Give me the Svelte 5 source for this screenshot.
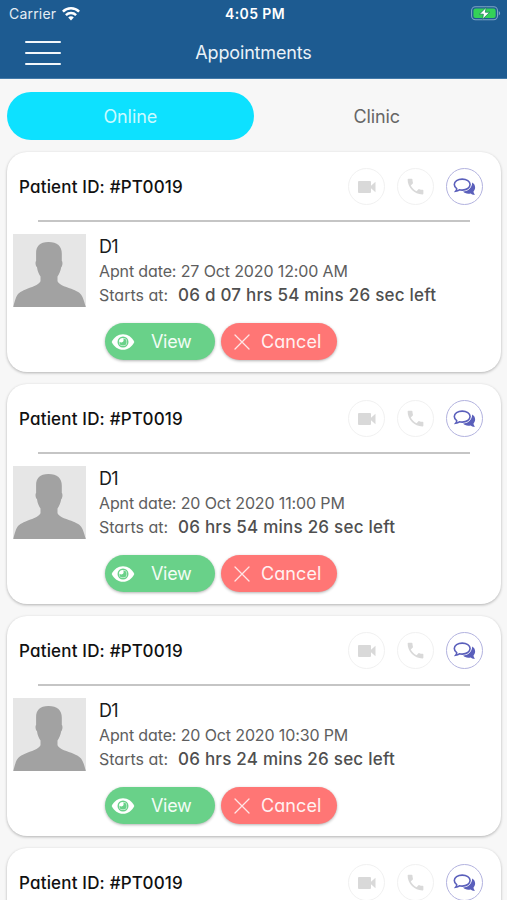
<script>
  const appointments = [
    { date: '27 Oct 2020 12:00 AM', left: '06 d 07 hrs 54 mins 26 sec left' },
    { date: '20 Oct 2020 11:00 PM', left: '06 hrs 54 mins 26 sec left' },
    { date: '20 Oct 2020 10:30 PM', left: '06 hrs 24 mins 26 sec left' },
    null
  ];
</script>

<div class="screen">
  <header>
    <div class="status">
      <div class="carrier">
        <span class="carrier-name">Carrier</span>
        <svg width="18" height="14" viewBox="0 0 18 14" fill="none" stroke="#fff" stroke-width="2.5">
          <path d="M.9 4.600C5.400.2 12.600.2 17.100 4.600" />
          <path d="M3.900 8.200c2.900-2.800 7.300-2.800 10.200 0" />
          <path d="M6.200 10.500c1.600-1.600 4-1.600 5.600 0L9 13.500z" fill="#fff" stroke="none" />
        </svg>
      </div>
      <span class="time">4:05 PM</span>
      <svg class="battery" width="30" height="15" viewBox="0 0 31 15">
        <rect x=".6" y=".6" width="26.8" height="13.3" rx="4" fill="none" stroke="#7fa5c5" stroke-width="1.1" />
        <rect x="2.5" y="2.4" width="23" height="9.8" rx="2.2" fill="#34d158" />
        <path d="M28.7 5v4.6c1.9-.7 1.9-3.9 0-4.6z" fill="#7fa5c5" />
        <path d="M15.7 1.2 8.6 8.2h4.2l-.8 5.2 7.3-7.2h-4.5z" fill="#fff" stroke="#1d7a5c" stroke-width=".8" />
      </svg>
    </div>
    <div class="nav">
      <button class="menu" aria-label="Menu"><i></i><i></i><i></i></button>
      <h1>Appointments</h1>
      <span></span>
    </div>
  </header>

  <div class="tabs">
    <button class="tab active">Online</button>
    <button class="tab">Clinic</button>
  </div>

  <main>
    {#each appointments as item}
      <article class="card">
        <div class="top">
          <span class="pid">Patient ID: #PT0019</span>
          <div class="actions">
            <span class="round">
              <svg width="20" height="14" viewBox="0 0 20 14" fill="#d9d9d9">
                <path d="M2 1h11q1 0 1 1v3.8L18.5 1.8v10.4L14 8.2V12q0 1-1 1H2q-1 0-1-1V2q0-1 1-1z" />
              </svg>
            </span>
            <span class="round">
              <svg width="21" height="21" viewBox="0 0 24 24" fill="#d9d9d9">
                <path d="M6.6 10.8c1.4 2.8 3.8 5.1 6.6 6.6l2.2-2.2c.3-.3.7-.4 1-.2 1.1.4 2.3.6 3.6.6.6 0 1 .4 1 1V20c0 .6-.4 1-1 1C10.6 21 3 13.4 3 4c0-.6.4-1 1-1h3.5c.6 0 1 .4 1 1 0 1.2.2 2.4.6 3.6.1.3 0 .7-.2 1z" />
              </svg>
            </span>
            <span class="round chat">
              <svg width="23" height="18" viewBox="0 0 23 18">
                <path d="M19.2 4.600c3.300 1.900 3.900 6 1.300 8.800.1 1.300.7 2.300 1.500 3.400-1.800.2-3.200-.3-4.300-1.300-3.200.7-6.200 0-7.600-1.900 5.400-.1 9-4 9.100-9z" fill="#5a5fbb" />
                <path d="M9.200 1.100c4.400 0 7.900 2.400 7.900 5.500s-3.500 5.500-7.900 5.500c-1 0-1.900-.1-2.800-.3-1 .8-2.300 1.300-3.700 1.400.8-.9 1.100-1.600 1-2.600-1.500-1-2.400-2.400-2.400-4 0-3.100 3.500-5.500 7.900-5.500z" fill="#fff" stroke="#5a5fbb" stroke-width="1.600" />
              </svg>
            </span>
          </div>
        </div>
        {#if item}
          <hr />
          <div class="info">
            <svg class="avatar" width="73" height="73" viewBox="0 0 73 73">
              <rect width="73" height="73" fill="#e6e6e6" />
              <path d="M35.5 8c9 0 13.500 4.500 13.300 12v7c1.100.5.8 5-.6 6.300-.6 4-2.200 7-3.700 9.200v4.800c2 4.500 10 6 16 8.400 7.500 3.200 9 4.500 12.300 17.300H.3C3.500 60.200 4.500 59 12 55.700c6-2.600 14-4.500 15.500-8.400v-4.800c-1.800-2.500-3-5.500-3.500-9.200-1.500-1.300-2-5.500-.9-6.300v-7C22.900 12.500 26.500 8 35.500 8z" fill="#a2a2a2" />
            </svg>
            <div class="text">
              <div class="name">D1</div>
              <div class="line date">Apnt date: {item.date}</div>
              <div class="line"><span class="starts">Starts at:</span><b>{item.left}</b></div>
            </div>
          </div>
          <div class="buttons">
            <button class="btn view">
              <svg width="24" height="18" viewBox="0 0 24 18">
                <path d="M.7 9C3 4.200 7.100 1.200 12 1.200S21 4.200 23.300 9C21 13.800 16.900 16.800 12 16.800S3 13.800.7 9z" fill="#fff" />
                <circle cx="12" cy="9" r="5.500" fill="#69d189" />
                <circle cx="12" cy="9" r="4.100" fill="#fff" />
                <path d="M12.200 5.400A3.600 3.600 0 1 1 8.500 8.400c1 1.500 3.400 1.300 4-.3.300-1 .1-1.900-.3-2.700z" fill="#69d189" />
              </svg>
              <span>View</span>
            </button>
            <button class="btn cancel">
              <svg width="16" height="16" viewBox="0 0 16 16" stroke="#ffe6e6" stroke-width="1.300" stroke-linecap="round">
                <path d="M1 1l14 14M15 1L1 15" />
              </svg>
              <span>Cancel</span>
            </button>
          </div>
        {/if}
      </article>
    {/each}
  </main>
</div>

<style>
  .screen {
    width: 507px;
    height: 900px;
    overflow: hidden;
    background: #f7f7f7;
    font-family: Inter, 'Open Sans', sans-serif;
  }
  svg { display: block; flex: none; }
  button { border: 0; padding: 0; font: inherit; background: none; }
  header {
    height: 79px;
    box-sizing: border-box;
    background: #1d5b91;
    color: #fff;
    border-bottom: 1px solid #437aa9;
  }
  .status, .nav {
    display: grid;
    grid-template-columns: 1fr auto 1fr;
    align-items: center;
  }
  .status { height: 27px; padding: 0 6px 0 9px; font-size: 14px; }
  .carrier { display: flex; align-items: center; gap: 6px; color: #e5edf4; }
  .carrier-name { width: 47px; letter-spacing: 0.2px; white-space: nowrap; }
  .time { font-size: 14px; font-weight: 600; letter-spacing: 0.4px; }
  .battery { justify-self: end; }
  .nav { height: 51px; padding: 0 25px; }
  .menu { display: flex; flex-direction: column; gap: 9px; width: 36px; }
  .menu i { height: 2px; background: #f3f8fc; border-radius: 1px; }
  h1 { margin: 0; font-size: 18px; font-weight: 400; letter-spacing: -0.15px; color: #eaf2f8; }
  .tabs { display: flex; padding: 13px 7px 0; height: 48px; }
  .tab { flex: 1; border-radius: 24px; font-size: 18px; letter-spacing: -0.1px; color: #666; }
  .tab.active { background: #0de1ff; color: #c9faff; }
  main {
    display: flex;
    flex-direction: column;
    gap: 12px;
    padding: 12px 6px 0 7px;
    font-feature-settings: 'cv11';
  }
  .card {
    height: 220px;
    box-sizing: border-box;
    border-radius: 20px;
    background: #fff;
    box-shadow: 0 1px 3px rgba(0, 0, 0, 0.28);
    padding: 16px 0 0 6px;
    flex: none;
  }
  .top {
    display: flex;
    justify-content: space-between;
    align-items: center;
    height: 37px;
    padding: 0 18px 0 6px;
  }
  .pid { font-size: 17px; font-weight: 500; letter-spacing: 0.18px; color: #111; }
  .actions { display: flex; gap: 12px; }
  .round {
    display: flex;
    align-items: center;
    justify-content: center;
    width: 37px;
    height: 37px;
    box-sizing: border-box;
    border: 1.5px solid #f1f1f1;
    border-radius: 50%;
  }
  .chat { border: 1px solid #b3b3df; }
  hr { height: 2px; margin: 15px 31px 12px 25px; border: 0; background: #c5c5c5; }
  .info { display: flex; gap: 13px; height: 76px; }
  .text { white-space: nowrap; color: #5e5e5e; }
  .name { font-size: 18px; line-height: 25px; letter-spacing: -0.8px; color: #1b1b1b; }
  .line { display: flex; font-size: 16px; line-height: 24px; }
  .date { letter-spacing: -0.13px; }
  .starts { width: 79px; }
  b { font-weight: 500; font-size: 17px; color: #4f4f4f; letter-spacing: 0.23px; }
  .buttons { display: flex; gap: 6px; padding: 13px 0 0 92px; }
  .btn {
    display: flex;
    align-items: center;
    height: 37px;
    border-radius: 19px;
    color: #f2fcf5;
    font-size: 18px;
    box-shadow: 0 1px 3px rgba(0, 0, 0, 0.3);
  }
  .view { width: 110px; background: #69d189; padding-left: 6px; gap: 16px; letter-spacing: -0.3px; }
  .cancel { width: 116px; background: #ff7675; padding-left: 13px; gap: 11px; color: #fff1f1; letter-spacing: 0.1px; }
</style>
